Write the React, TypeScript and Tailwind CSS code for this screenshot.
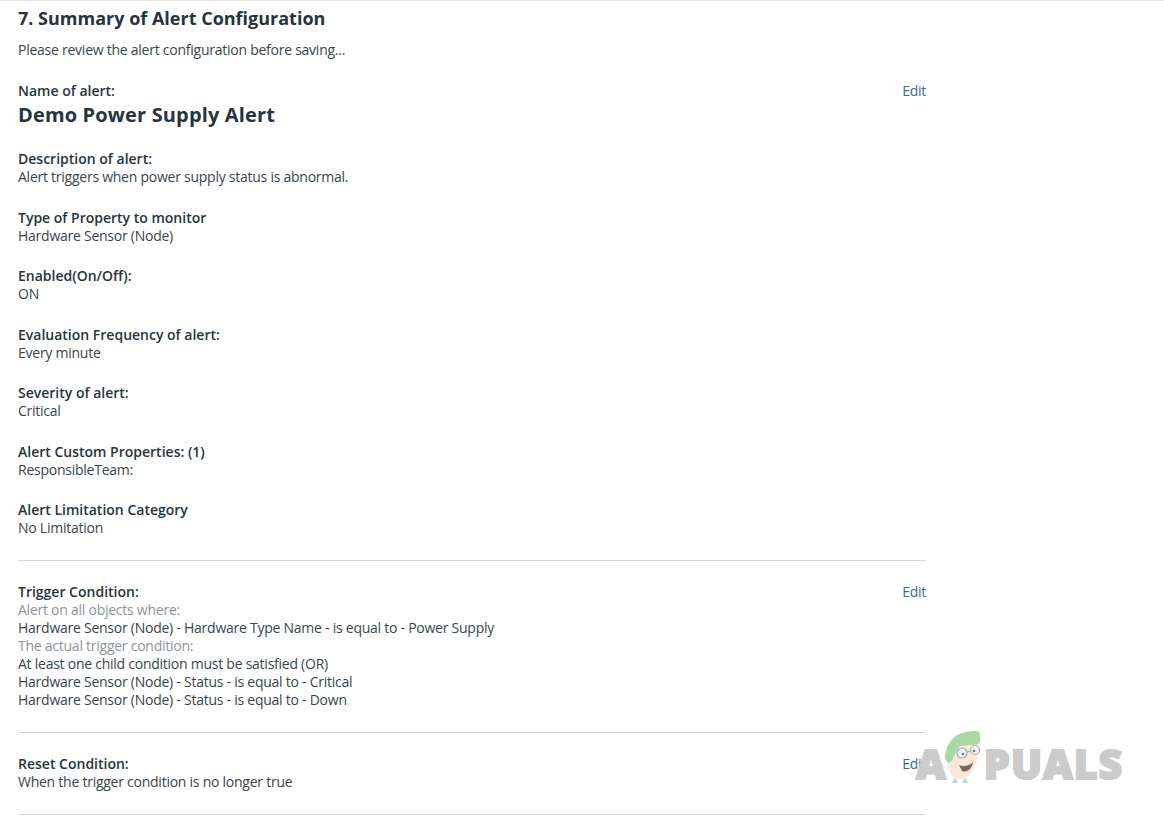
const fields = [
  { label: 'Type of Property to monitor', value: 'Hardware Sensor (Node)' },
  { label: 'Enabled(On/Off):', value: 'ON' },
  { label: 'Evaluation Frequency of alert:', value: 'Every minute' },
  { label: 'Severity of alert:', value: 'Critical' },
  { label: 'Alert Custom Properties: (1)', value: 'ResponsibleTeam:' },
  { label: 'Alert Limitation Category', value: 'No Limitation' },
]

function Label({ children }: { children: React.ReactNode }) {
  return <div className="font-semibold tracking-normal text-[#26343b]">{children}</div>
}

function EditLink() {
  return <a className="text-[#3a6a94]">Edit</a>
}

function Watermark() {
  return (
    <div className="pointer-events-none absolute left-[916px] top-[728px] h-[54px] w-[210px] select-none tracking-normal">
      <div className="absolute left-0 top-[9px] text-[41px] leading-[50px] font-extrabold text-[#cbcbcb] [-webkit-text-stroke:2px_#cbcbcb]">
        A
      </div>
      <svg className="absolute left-[20px] top-0" width="50" height="54" viewBox="0 0 50 54">
        <path d="M11 31 C11 38 14 46 19 50 L29 50 C35 46 40 38 42 28 L42 14 L20 18 Z" fill="#fbe9d8" />
        <path d="M9 30 C9 18 16 6 27 4 C33 2 42 1 44 4 L44 14 C38 17 30 16 24 17 C20 21 18 27 16 32 L12 34 Z" fill="#a9d8a4" />
        <circle cx="26" cy="24" r="5" fill="#eaf4f6" stroke="#9fb2b6" strokeWidth="1.2" />
        <circle cx="39" cy="21" r="4.5" fill="#eaf4f6" stroke="#9fb2b6" strokeWidth="1.2" />
        <path d="M31 23 L34.500 22" stroke="#9fb2b6" strokeWidth="1.2" />
        <circle cx="27" cy="25" r="1.2" fill="#6b6b6b" />
        <circle cx="38" cy="22" r="1.200" fill="#6b6b6b" />
        <path d="M23 36 C28 38 33 37 37 33 C36 40 31 44 26 42 Z" fill="#7a6a60" />
        <path d="M16 54 L19 49 L22 54 M26 54 L29 49 L32 54" fill="#a9d8e6" />
      </svg>
      <div className="absolute left-[68px] top-[9px] text-[41px] leading-[50px] font-extrabold tracking-[1px] text-[#cbcbcb] [-webkit-text-stroke:2px_#cbcbcb]">
        PUALS
      </div>
    </div>
  )
}

export default function App() {
  return (
    <div className="relative h-[825px] w-[1164px] overflow-hidden border-t border-[#e6e6e6] bg-white font-['Open_Sans',sans-serif] text-[14px] leading-[18px] tracking-[-0.25px] text-[#37454d]">
      <div className="w-[926px] pl-[18px]">
        <h2 className="mt-[4px] text-[18px] leading-[26px] font-bold tracking-normal text-[#26343b]">7. Summary of Alert Configuration</h2>
        <p className="mt-[10px]">Please review the alert configuration before saving...</p>

        <div className="mt-[23px] flex justify-between">
          <Label>Name of alert:</Label>
          <EditLink />
        </div>
        <div className="mt-[1px] text-[20px] leading-[28px] font-bold tracking-[0.15px] text-[#26343b]">Demo Power Supply Alert</div>

        <div className="mt-[21px]">
          <Label>Description of alert:</Label>
          <div>Alert triggers when power supply status is abnormal.</div>
        </div>

        {fields.map((f) => (
          <div key={f.label} className="mt-[22.5px]">
            <Label>{f.label}</Label>
            <div>{f.value}</div>
          </div>
        ))}

        <hr className="mt-[23px] border-[#d4d4d4]" />

        <div className="mt-[22px] flex justify-between">
          <Label>Trigger Condition:</Label>
          <EditLink />
        </div>
        <div className="text-[#8c9498]">Alert on all objects where:</div>
        <div>Hardware Sensor (Node) - Hardware Type Name - is equal to - Power Supply</div>
        <div className="text-[#8c9498]">The actual trigger condition:</div>
        <div>At least one child condition must be satisfied (OR)</div>
        <div>Hardware Sensor (Node) - Status - is equal to - Critical</div>
        <div>Hardware Sensor (Node) - Status - is equal to - Down</div>

        <hr className="mt-[23px] border-[#d4d4d4]" />

        <div className="mt-[22px] flex justify-between">
          <Label>Reset Condition:</Label>
          <EditLink />
        </div>
        <div>When the trigger condition is no longer true</div>

        <hr className="mt-[23px] border-[#d4d4d4]" />
      </div>
      <Watermark />
    </div>
  )
}
